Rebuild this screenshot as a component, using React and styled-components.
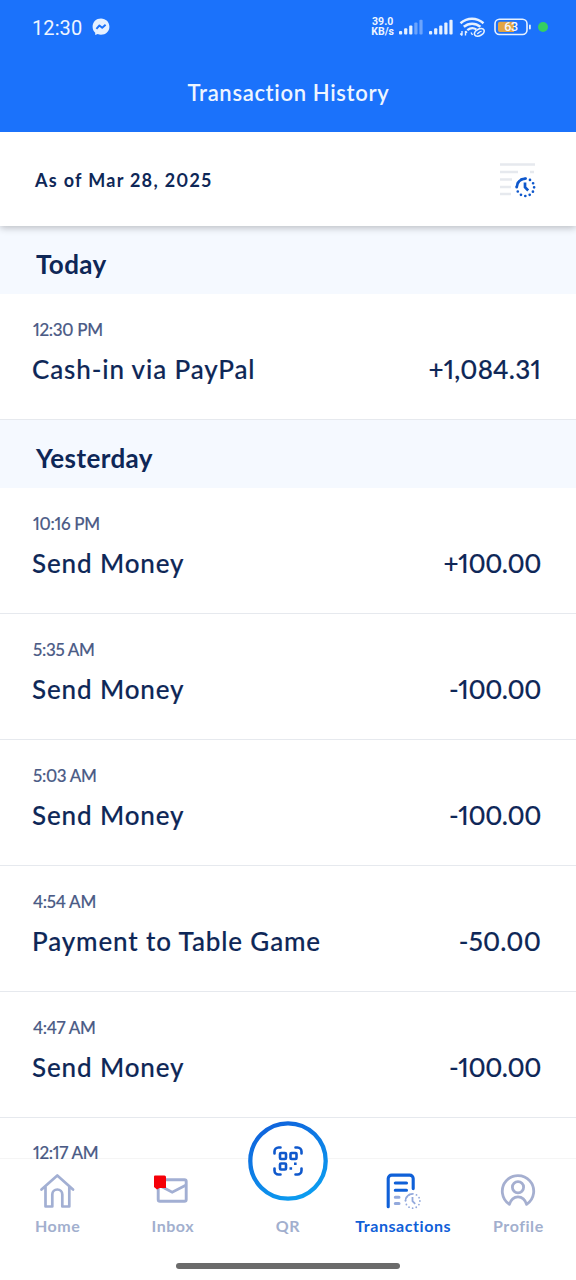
import React from "react";
//styles
import styled, { createGlobalStyle } from "styled-components";

const days = [
  {
    name: "Today",
    items: [
      { time: "12:30 PM", title: "Cash-in via PayPal", amount: "+1,084.31" },
    ],
  },
  {
    name: "Yesterday",
    items: [
      { time: "10:16 PM", title: "Send Money", amount: "+100.00" },
      { time: "5:35 AM", title: "Send Money", amount: "-100.00" },
      { time: "5:03 AM", title: "Send Money", amount: "-100.00" },
      { time: "4:54 AM", title: "Payment to Table Game", amount: "-50.00" },
      { time: "4:47 AM", title: "Send Money", amount: "-100.00" },
      { time: "12:17 AM" },
    ],
  },
];

const MessengerIcon = () => (
  <svg width="18" height="18" viewBox="0 0 18 18">
    <path
      d="M9 .6C4.200.6.6 4.100.6 8.700c0 2.500 1 4.500 2.600 6v2.400l2.500-1c1 .4 2.100.6 3.300.6 4.800 0 8.400-3.500 8.400-8S13.800.6 9 .6z"
      fill="#e6f1ff"
    />
    <path
      d="M4.400 10.800l3-3.300 2.800 2.200 3.400-3"
      fill="none"
      stroke="#1b72fb"
      strokeWidth="1.900"
      strokeLinejoin="round"
    />
  </svg>
);

const SignalIcon = ({ bars }) => (
  <svg width="26" height="18" viewBox="0 0 26 18">
    {[0, 1, 2, 3, 4].map((i) => (
      <rect
        key={i}
        x={1 + i * 5.1}
        y={13 - i * 2.8}
        width="3.2"
        height={3.4 + i * 2.8}
        rx="1"
        fill="#e6f1ff"
        opacity={i < bars ? 1 : 0.4}
      />
    ))}
  </svg>
);

const WifiIcon = () => (
  <svg width="28" height="20" viewBox="0 0 28 20" fill="none" stroke="#e6f1ff">
    <path d="M1.500 6.200c7-6 16-6 23 0" strokeWidth="2.500" />
    <path d="M4.800 9.800c5-4.200 11.600-4.200 16.600 0" strokeWidth="2.500" />
    <path d="M8.300 13.200c3-2.500 6.500-2.500 9 -.8" strokeWidth="2.300" />
    <path
      d="M3 14v4.500M1.300 16.500L3 18.500M6.500 18.500V14M8 15.800L6.500 14M12 15.500l1.500 2.500"
      strokeWidth="1.400"
    />
    <ellipse
      cx="20.300"
      cy="15.400"
      rx="5.200"
      ry="3.300"
      transform="rotate(-28 20.300 15.400)"
      strokeWidth="1.600"
    />
    <path d="M18 16.600c1.500.6 2-2.600 4.600-2.200" strokeWidth="1.400" />
  </svg>
);

const BatteryIcon = () => (
  <svg width="38" height="18" viewBox="0 0 38 18">
    <rect
      x="1"
      y="1.300"
      width="32"
      height="15.200"
      rx="4.500"
      fill="none"
      stroke="#e6f1ff"
      strokeWidth="1.600"
    />
    <path d="M6 3.800h14v10.200H6a2 2 0 0 1-2-2V5.800a2 2 0 0 1 2-2z" fill="#e2a545" />
    <rect x="35" y="6.500" width="1.800" height="5" rx=".9" fill="#e6f1ff" />
    <text
      x="17"
      y="13.400"
      textAnchor="middle"
      fontFamily="Roboto, sans-serif"
      fontWeight="500"
      fontSize="12.500"
      letterSpacing="-.3"
      fill="#f3f7ff"
    >
      63
    </text>
  </svg>
);

const HistoryIcon = () => (
  <svg width="38" height="38" viewBox="0 0 38 38" fill="none">
    <path
      d="M1 3.500h35M1 11h18M31 11h4M1 18.500h12M1 26h11M1 33h11"
      stroke="#e6e9ee"
      strokeWidth="2.700"
    />
    <path d="M17.700 26.300a8.700 8.700 0 0 1 8.700-8.700" stroke="#0f58cc" strokeWidth="2.700" />
    <circle
      cx="26.400"
      cy="26.300"
      r="8.700"
      stroke="#0f58cc"
      strokeWidth="2.700"
      strokeLinecap="round"
      strokeDasharray="0 4.555"
    />
    <path d="M26 21.600v4.700l3.200 3.200" stroke="#0f58cc" strokeWidth="2.700" />
  </svg>
);

const HomeIcon = () => (
  <svg width="36" height="36" viewBox="0 0 36 36" fill="none" stroke="#a2afd3">
    <path
      d="M1.500 16.500L17.300 2.500 33 16.500M5.500 14v19.500h6.800V21.500a5 5 0 0 1 10 0v12h7V14"
      strokeWidth="2.700"
      strokeLinejoin="round"
      strokeLinecap="round"
    />
  </svg>
);

const InboxIcon = () => (
  <svg width="36" height="36" viewBox="1 0 36 36" fill="none" overflow="visible">
    <rect
      x="4.200"
      y="6.800"
      width="28"
      height="21.500"
      rx="1.800"
      stroke="#a2afd3"
      strokeWidth="2.900"
    />
    <path d="M4.500 12l13.700 7.200 14-7.200" stroke="#a2afd3" strokeWidth="2.900" />
    <path
      d="M1 2.500h9.500a1.500 1.500 0 0 1 1.500 1.500v11H5.500l-2.500 1.500L0 14V3.500a1 1 0 0 1 1-1z"
      fill="#f50008"
    />
  </svg>
);

const TransactionsIcon = () => (
  <svg width="36" height="36" viewBox="0 0 36 36" fill="none">
    <path
      d="M3.200 33.700V5.600a3.500 3.500 0 0 1 3.500-3.500h18a3.500 3.500 0 0 1 3.500 3.500v10"
      stroke="#0f60d8"
      strokeWidth="3.100"
      strokeLinecap="round"
    />
    <path
      d="M10.300 10H21.500M10.300 17.200H21.500"
      stroke="#0f60d8"
      strokeWidth="3.100"
      strokeLinecap="round"
    />
    <path
      d="M10.300 24.200h3.700M10.300 30.500h3.700"
      stroke="#93a9dc"
      strokeWidth="3"
      strokeLinecap="round"
    />
    <path d="M20.500 28a7.200 7.200 0 0 1 7.200-7.200" stroke="#93a9dc" strokeWidth="1.700" />
    <circle
      cx="27.700"
      cy="28"
      r="7.200"
      stroke="#93a9dc"
      strokeWidth="1.800"
      strokeLinecap="round"
      strokeDasharray="0 3.770"
    />
    <path d="M27.500 24v4.200l2.700 2.700" stroke="#93a9dc" strokeWidth="1.800" />
  </svg>
);

const ProfileIcon = () => (
  <svg width="36" height="36" viewBox="0 0 36 36" fill="none" stroke="#a5afd0">
    <path
      d="M9.400 31.400a15.700 15.700 0 1 1 17.200 0c-1.500-5-4.500-7.600-8.600-7.600s-7.100 2.600-8.600 7.600z"
      strokeWidth="2.800"
      strokeLinejoin="round"
    />
    <circle cx="18" cy="14.200" r="5.600" strokeWidth="2.800" />
  </svg>
);

const QrIcon = () => (
  <svg width="80" height="80" viewBox="0 0 80 80" fill="none">
    <defs>
      <linearGradient id="ring" x1=".2" y1="0" x2=".7" y2="1">
        <stop offset="0" stopColor="#0f62dc" />
        <stop offset="1" stopColor="#0c9df0" />
      </linearGradient>
    </defs>
    <circle cx="40" cy="40" r="37.700" fill="#fff" stroke="url(#ring)" strokeWidth="4.300" />
    <g stroke="#0f58cc" strokeWidth="2.600">
      <path
        d="M26.500 32.500v-2a4 4 0 0 1 4-4h2M47.500 26.500h2a4 4 0 0 1 4 4v2M53.500 47.500v2a4 4 0 0 1-4 4h-2M32.500 53.500h-2a4 4 0 0 1-4-4v-2"
        strokeLinecap="round"
      />
      <rect x="32" y="32" width="6" height="6" rx="1" />
      <rect x="42.500" y="32" width="6" height="6" rx="1" />
      <rect x="32" y="42.500" width="6" height="6" rx="1" />
      <path d="M41.500 47.500h2.600M46 42.800h2.600" />
    </g>
  </svg>
);

const App = () => {
  return (
    <Page>
      <GlobalStyle />
      <Header>
        <StatusBar>
          <Clock>12:30</Clock>
          <MessengerIcon />
          <StatusIcons>
            <Speed>
              <span>39.0</span>
              <span>KB/s</span>
            </Speed>
            <SignalIcon bars={3} />
            <SignalIcon bars={5} />
            <Wifi>
              <WifiIcon />
            </Wifi>
            <BatteryIcon />
            <Dot />
          </StatusIcons>
        </StatusBar>
        <Title>Transaction History</Title>
      </Header>
      <DateBar>
        <span>As of Mar 28, 2025</span>
        <HistoryIcon />
      </DateBar>
      <List>
        {days.map((day) => (
          <section key={day.name}>
            <DayName>{day.name}</DayName>
            {day.items.map((item) => (
              <Item key={item.time} $short={!item.title}>
                <Time>{item.time}</Time>
                {item.title && (
                  <ItemRow>
                    <span>{item.title}</span>
                    <Amount $tight={item.amount.includes("100")}>
                      {item.amount}
                    </Amount>
                  </ItemRow>
                )}
              </Item>
            ))}
          </section>
        ))}
      </List>
      <Nav>
        <Tab>
          <HomeIcon />
          <span>Home</span>
        </Tab>
        <Tab>
          <InboxIcon />
          <span>Inbox</span>
        </Tab>
        <Tab>
          <QrButton>
            <QrIcon />
          </QrButton>
          <span>QR</span>
        </Tab>
        <Tab $active>
          <TransactionsIcon />
          <span>Transactions</span>
        </Tab>
        <Tab>
          <ProfileIcon />
          <span>Profile</span>
        </Tab>
        <HomeBar />
      </Nav>
    </Page>
  );
};

const GlobalStyle = createGlobalStyle`
  * {
    margin: 0;
    padding: 0;
    box-sizing: border-box;
  }
  body {
    background: #fff;
    font-family: Lato, "Open Sans", sans-serif;
    font-variant-numeric: proportional-nums;
    color: #0e2757;
  }
  svg {
    display: block;
    flex-shrink: 0;
  }
`;

const Page = styled.div`
  display: flex;
  flex-direction: column;
  height: 1280px;
  overflow: hidden;
`;

const Header = styled.header`
  height: 132px;
  flex-shrink: 0;
  background: #1b72fb;
  color: #eef5ff;
`;

const StatusBar = styled.div`
  display: flex;
  align-items: center;
  height: 54px;
  padding: 0 28px 0 32px;
  font-family: Roboto, sans-serif;
  font-variant-numeric: normal;
`;

const Clock = styled.span`
  font-size: 20px;
  letter-spacing: 0.1px;
  margin-right: 10px;
  padding-top: 1px;
`;

const StatusIcons = styled.div`
  display: flex;
  align-items: center;
  margin-left: auto;
  gap: 4px;
`;

const Speed = styled.span`
  display: flex;
  flex-direction: column;
  font-size: 10.5px;
  line-height: 10px;
  font-weight: 700;
  text-align: center;
`;

const Wifi = styled.span`
  margin: 0 3px 0 1px;
`;

const Dot = styled.span`
  width: 10px;
  height: 10px;
  border-radius: 50%;
  background: #35cf62;
  margin-left: 2px;
`;

const Title = styled.h1`
  font-size: 22px;
  line-height: 30px;
  font-weight: 600;
  letter-spacing: 0.67px;
  text-align: center;
  padding: 24px 0 0 1px;
`;

const DateBar = styled.div`
  position: relative;
  z-index: 1;
  display: flex;
  align-items: center;
  justify-content: space-between;
  height: 94px;
  flex-shrink: 0;
  padding: 2px 39px 0 35px;
  background: #fff;
  box-shadow: 0 2px 7px rgba(0, 0, 0, 0.24);
  clip-path: inset(0 0 -12px 0);
  font-size: 18px;
  font-weight: 700;
  letter-spacing: 1.3px;
`;

const List = styled.main`
  height: 934px;
  flex-shrink: 0;
`;

const DayName = styled.h2`
  height: 68px;
  padding: 4px 36px 0;
  background: #f5f9ff;
  font-size: 26px;
  line-height: 68px;
  font-weight: 700;
  letter-spacing: 0.4px;
`;

const Item = styled.div`
  height: ${(props) => (props.$short ? "42px" : "126px")};
  padding: ${(props) => (props.$short ? "24px" : "25px")} 35px 0 32px;
  border-bottom: ${(props) => (props.$short ? "none" : "1px solid #e6e9ee")};
`;

const Time = styled.p`
  font-size: 17px;
  line-height: 22px;
  font-weight: 500;
  letter-spacing: -0.3px;
  padding-left: 1px;
  color: #4b5b86;
  -webkit-text-stroke: 0.15px #4b5b86;
`;

const ItemRow = styled.div`
  display: flex;
  justify-content: space-between;
  margin-top: 11px;
  font-size: 26px;
  line-height: 34px;
  font-weight: 500;
  letter-spacing: 0.87px;
  -webkit-text-stroke: 0.15px #0e2757;
`;

const Amount = styled.span`
  letter-spacing: ${(props) => (props.$tight ? "-0.35px" : "0.2px")};
`;

const Nav = styled.nav`
  position: relative;
  display: grid;
  grid-template-columns: repeat(5, 1fr);
  height: 120px;
  flex-shrink: 0;
  &::before {
    content: "";
    position: absolute;
    top: -2px;
    left: 0;
    width: 100%;
    height: 1px;
    background: rgba(0, 0, 0, 0.04);
  }
`;

const Tab = styled.div`
  position: relative;
  display: flex;
  flex-direction: column;
  align-items: center;
  padding-top: 13px;
  color: ${(props) => (props.$active ? "#0f60d8" : "#a2afce")};
  font-size: 16px;
  line-height: 20px;
  font-weight: 700;
  letter-spacing: 0.55px;
  span {
    margin-top: 7px;
  }
`;

const QrButton = styled.div`
  height: 36px;
  svg {
    margin-top: -52px;
  }
`;

const HomeBar = styled.div`
  position: absolute;
  bottom: 11px;
  left: 176px;
  width: 224px;
  height: 6px;
  border-radius: 3px;
  background: #6b6b6b;
`;

export default App;
